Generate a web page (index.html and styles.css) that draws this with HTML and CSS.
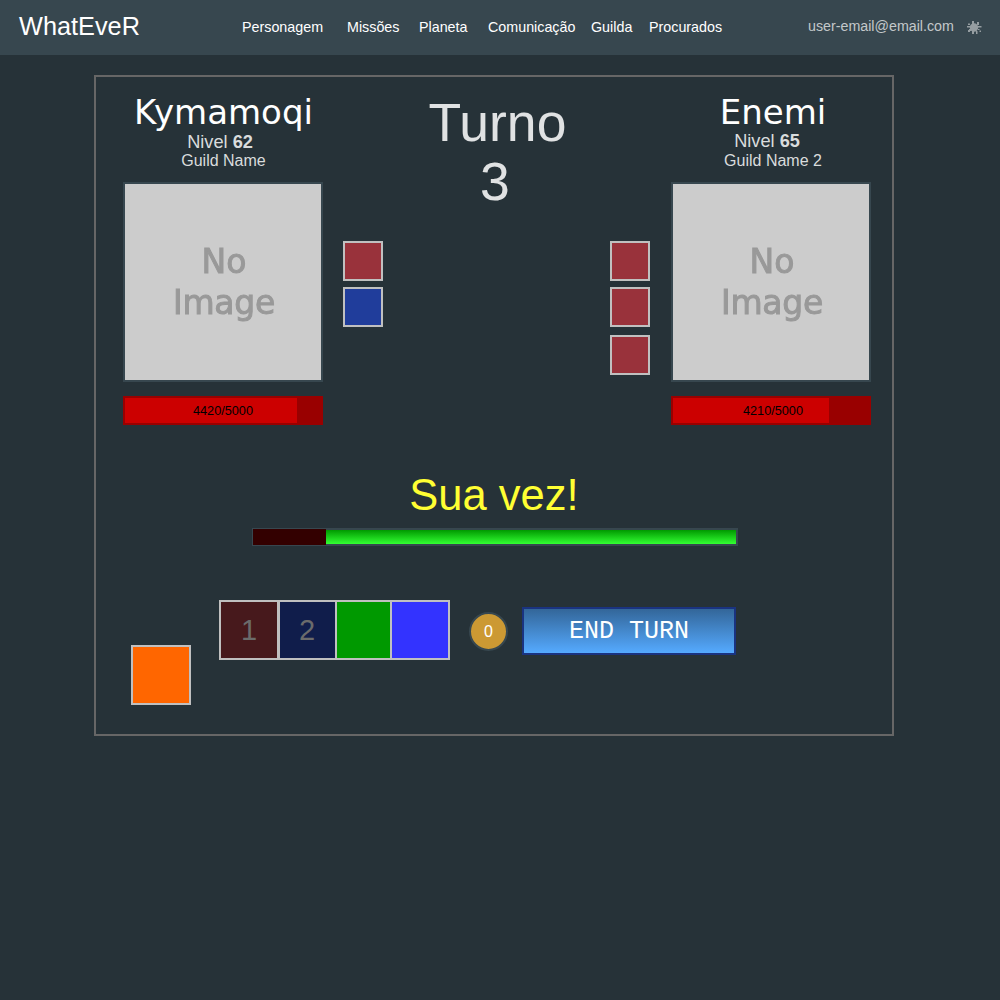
FILE: index.html
```html
<!DOCTYPE html>
<html lang="pt-BR">
<head>
<meta charset="utf-8">
<title>WhatEveR</title>
<link rel="stylesheet" href="styles.css">
</head>
<body>
<header class="topbar">
  <div class="logo">WhatEveR</div>
  <nav class="menu">
    <a>Personagem</a><a>Missões</a><a>Planeta</a><a>Comunicação</a><a>Guilda</a><a>Procurados</a>
  </nav>
  <div class="account">user-email@email.com</div>
  <svg class="gear" viewBox="0 0 16 16" width="16" height="16">
    <circle cx="8" cy="7.5" r="4.2"/>
    <path d="M6 1h2v3H6zM11 2h2v3h-2zM12 6h3.500v1.500H12zM12 9h1.500v1H12zM13.500 10.500H15V12h-1.500zM10 11h1.500v3H10zM6 11h2v3H6zM3 9h2v2H4v1H2v-2h1zM1 6h4v1.500H1zM2 3.500h2V5H2z"/>
  </svg>
</header>

<main class="board">
  <section class="arena">
    <div class="fighter player">
      <h2 class="name">Kymamoqi</h2>
      <p class="level">Nivel <b>62</b></p>
      <p class="guild">Guild Name</p>
      <div class="portrait"><span>No</span><span class="wide">Image</span></div>
      <div class="health"><div class="health-fill" style="width:172px"></div><span class="health-text">4420/5000</span></div>
    </div>
    <div class="slots">
      <div class="slot red"></div>
      <div class="slot blue"></div>
    </div>
    <div class="turn"><div>Turno</div><div class="turn-number">3</div></div>
    <div class="slots">
      <div class="slot red"></div>
      <div class="slot red"></div>
      <div class="slot red"></div>
    </div>
    <div class="fighter enemy">
      <h2 class="name">Enemi</h2>
      <p class="level">Nivel <b>65</b></p>
      <p class="guild">Guild Name 2</p>
      <div class="portrait"><span>No</span><span class="wide">Image</span></div>
      <div class="health"><div class="health-fill" style="width:156px"></div><span class="health-text">4210/5000</span></div>
    </div>
  </section>

  <h1 class="status">Sua vez!</h1>
  <div class="timer"><div class="elapsed" style="width:73px"></div></div>

  <section class="controls">
    <div class="card orange"></div>
    <div class="hand">
      <div class="card used-red">1</div>
      <div class="card used-blue">2</div>
      <div class="card green"></div>
      <div class="card bright-blue"></div>
    </div>
    <div class="coin">0</div>
    <button class="end-turn">END TURN</button>
  </section>
</main>
</body>
</html>
```
FILE: styles.css
```css
* { box-sizing: border-box; }

body {
  margin: 0;
  min-height: 1000px;
  background: #263238;
  color: #fff;
  font-family: "Liberation Sans", Arial, sans-serif;
}

h1, h2, p { margin: 0; font-weight: normal; }

.topbar {
  display: flex;
  height: 55px;
  padding-left: 19px;
  background: #37474f;
}
.logo { width: 223px; font-size: 25.3px; line-height: 53px; }
.menu {
  display: grid;
  grid-template-columns: 105px 72px 69px 103px 58px 159px;
  font-size: 14.3px;
  line-height: 55px;
}
.account { width: 158px; font-size: 14.25px; line-height: 52px; color: #c3c8ca; }
.gear { margin-top: 20px; fill: #959da1; }

.board {
  width: 800px;
  height: 661px;
  margin: 20px 0 0 94px;
  border: 2px solid #666;
}

.arena {
  display: grid;
  grid-template-columns: 200px 40px 1fr 41px 200px;
  column-gap: 20px;
  padding: 0 21px 0 27px;
  height: 348px;
}
.fighter { text-align: center; color: #d9dcdd; }
.name {
  padding-top: 15px;
  height: 55px;
  font: 34px/40px "DejaVu Sans", sans-serif;
  color: #fff;
}
.level { height: 19px; padding-right: 6px; font-size: 18.2px; line-height: 20px; }
.guild { height: 31px; font-size: 16px; line-height: 19px; }
.player .name, .player .guild { padding-left: 1px; }
.enemy .name { padding-left: 4px; }
.enemy .level { padding-right: 8px; line-height: 19px; }
.enemy .guild { padding-left: 4px; }

.portrait {
  display: flex;
  flex-direction: column;
  height: 200px;
  padding: 57px 0 0 2px;
  border: 2px solid #37474f;
  background: #ccc;
  color: #999;
  font: 33px/41px "DejaVu Sans", sans-serif;
  -webkit-text-stroke: 1px #999;
}
.portrait span { filter: blur(.6px); }
.portrait .wide { letter-spacing: -.3px; }

.health {
  display: flex;
  position: relative;
  height: 29px;
  margin-top: 14px;
  border: 2px solid #900;
  background: #900;
}
.health-fill { background: #c00; }
.health-text {
  position: absolute;
  inset: 0;
  color: #000;
  font-size: 12.7px;
  line-height: 27px;
}
.enemy .health-text { padding-left: 4px; }

.slots { padding-top: 164px; }
.slot { width: 40px; height: 40px; margin-bottom: 6px; border: 2px solid silver; }
.slot:nth-child(3) { margin-top: 8px; }
.red { background: #99323b; }
.blue { background: #203d9b; }

.turn {
  padding: 16px 0 0 2px;
  text-align: center;
  color: #e0e2e3;
  font-size: 53.5px;
  line-height: 59px;
}
.turn-number { padding-right: 5px; }

.status {
  height: 50px;
  margin-top: 45px;
  text-align: center;
  font-size: 43.5px;
  line-height: 50px;
  color: #ff3;
}
.timer {
  width: 486px;
  height: 18px;
  margin: 8px 0 0 156px;
  border: 2px solid #37474f;
  background: linear-gradient(#090, #3f3) padding-box;
}
.elapsed { height: 16px; margin: -1px; background: #300; }

.controls { display: flex; margin-top: 54px; padding-left: 35px; }
.card {
  flex: none;
  width: 60px;
  height: 60px;
  border: 2px solid silver;
  text-align: center;
  font-size: 29px;
  line-height: 56px;
  color: #6b6b6b;
}
.orange { margin-top: 45px; background: #f60; }
.hand { display: flex; width: 231px; margin-left: 28px; }
.used-red { background: #47191c; }
.used-blue { margin-left: -1px; padding-right: 2px; background: #101d4b; }
.green { margin-left: -3px; background: #090; }
.bright-blue { margin-left: -5px; background: #33f; }
.coin {
  width: 39px;
  height: 39px;
  margin: 12px 0 0 19px;
  border: 2px solid #37474f;
  border-radius: 50%;
  background: #c93;
  text-align: center;
  font-size: 16px;
  line-height: 35px;
}
.end-turn {
  width: 214px;
  height: 48px;
  margin: 7px 0 0 14px;
  padding: 2px 0 0;
  border: 2px solid #1a3380;
  background: linear-gradient(#369, #55aaff) padding-box;
  color: #fff;
  font: 25px/42px "Liberation Mono", monospace;
}
```
